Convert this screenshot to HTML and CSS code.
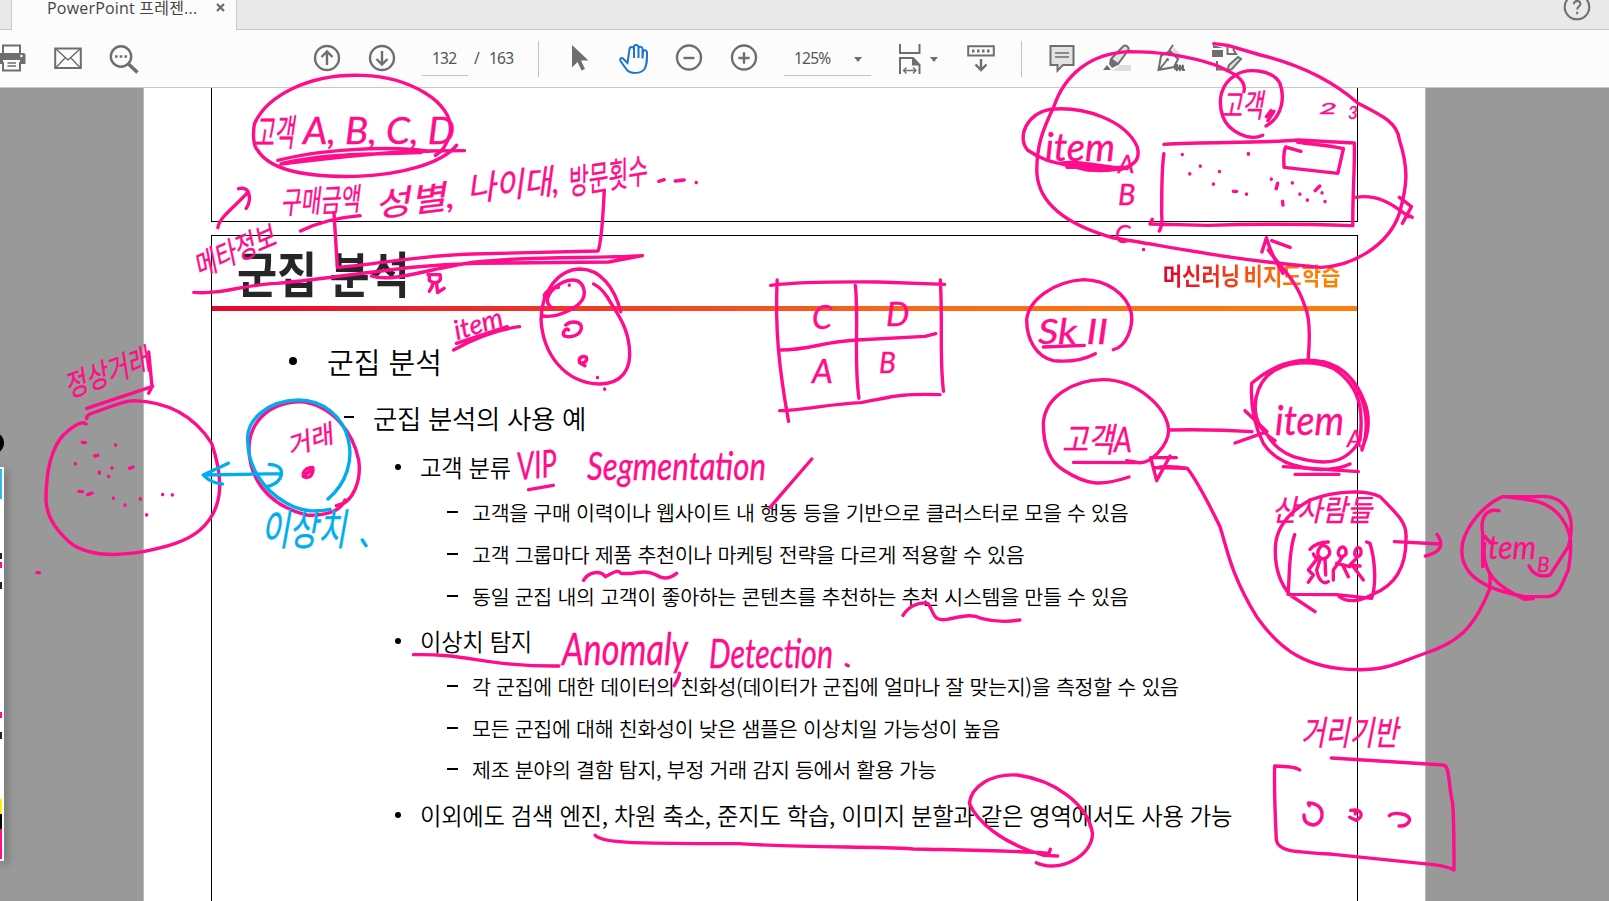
FILE: index.html
```html
<!DOCTYPE html>
<html lang="ko">
<head>
<meta charset="utf-8">
<title>PowerPoint 프레젠테이션</title>
<link rel="stylesheet" href="styles.css">
</head>
<body>
<div class="app">
  <header class="tabbar">
    <div class="tab"><span class="tab-title">PowerPoint 프레젠...</span><svg class="tab-close" viewBox="0 0 9 9"><path d="M1 1l7 7M8 1l-7 7"/></svg></div>
    <svg class="help" viewBox="0 0 28 28"><circle cx="14" cy="14" r="12.3"/><path d="M10.800 11.200c0-4.400 6.800-4.200 6.600-.2-.2 2.600-3.200 2.600-3.200 5.500M14.200 18.800v2.400"/></svg>
  </header>
  <nav class="toolbar">
    <svg class="ic print" viewBox="0 0 26 28"><path class="s" d="M3 10V1.500h17V10M3 18v8.500h17V18"/><path class="f" d="M0 9h23.500q2 0 2 2v9H20v-4H3v4H0z"/><path class="t" d="M7.500 19h8.500M7.500 22h8.500"/><circle cx="21.500" cy="12" r="1.200" fill="#fff"/></svg>
    <svg class="ic mail" viewBox="0 0 28 28"><path class="s" d="M1.200 4.500h25.600v19.500H1.200z"/><path class="t" d="M2 5l12 11L26 5M2 23.500l9-9.500M26 23.500l-9-9.500"/></svg>
    <svg class="ic find" viewBox="0 0 30 30"><circle class="s b" cx="12" cy="12.500" r="10.200"/><path class="s thick" d="M19.500 20l9 8.500"/><path class="f" d="M6 11.300h2.600v2.400H6zM10.700 11.300h2.600v2.400h-2.600zM15.400 11.300H18v2.400h-2.600z"/></svg>
    <svg class="ic up" viewBox="0 0 28 28"><circle class="s b" cx="14" cy="14" r="12"/><path class="s b" d="M14 21V8M8.500 13L14 7.500l5.500 5.500"/></svg>
    <svg class="ic down" viewBox="0 0 28 28"><circle class="s b" cx="14" cy="14" r="12"/><path class="s b" d="M14 7v13M8.500 15l5.500 5.500 5.500-5.500"/></svg>
    <div class="field page-no">132</div><span class="slash">/</span><span class="total">163</span>
    <i class="sep s1"></i>
    <svg class="ic cursor" viewBox="0 0 18 28"><path class="f" d="M1 1v22.500l5.500-5.500 4 8.500 3.500-1.500-4-8.500h7.500z"/></svg>
    <svg class="ic hand" viewBox="0 0 30 30"><path class="s blue" d="M8.500 19L4 14.500c-2-1.500-3.500.5-2.500 2.500l6.500 9c4 4 14 4 17.500-1 2.500-4 2.500-8 2.500-16.500-.5-3-4-3-4 0l-.5 6V4.500c-.5-2.500-4-2.500-4 0V14 3c-.5-2.600-4.500-2.600-4.500 0v11V5c-.5-3-4.500-2.500-4.500.5z"/></svg>
    <svg class="ic minus" viewBox="0 0 28 28"><circle class="s b" cx="14" cy="13.500" r="12"/><path class="s b" d="M8.500 14h11"/></svg>
    <svg class="ic plus" viewBox="0 0 28 28"><circle class="s b" cx="14" cy="13.500" r="12"/><path class="s b" d="M8.300 14h11.400M14 8.300v11.400"/></svg>
    <div class="field zoom">125%<b class="caret"></b></div>
    <svg class="ic fit" viewBox="0 0 24 30"><path class="s" d="M2 0v9h19.500V0M2 30V14h13l6.500 7v9"/><path class="f" d="M14 13l8 8.500h-8z"/><path class="t" d="M5.500 26.500h12.500M8.500 23.500l-3 3 3 3M15 23.500l3 3-3 3"/></svg><b class="caret c2"></b>
    <svg class="ic keys" viewBox="0 0 28 28"><path class="s" d="M1.200 2.200h25.600v9.300H1.200z"/><path class="f" d="M5 5.500h2.500v3H5zM10 5.500h2.500v3H10zM15 5.500h2.500v3H15zM20 5.500h2.500v3H20z"/><path class="s b" d="M14 15v11M8.500 20.500L14 26l5.500-5.500"/></svg>
    <i class="sep s2"></i>
    <svg class="ic note" viewBox="0 0 26 28"><path class="s g" d="M1.500 2h23v19H14l-5.500 5.500V21h-7z"/><path class="t" d="M6 9h14M6 13h14"/></svg>
    <svg class="ic mark" viewBox="0 0 28 28"><path class="pale" d="M9 27l8-6h11v6z"/><path class="s g" d="M8 15L20 2.500c3-2.500 7 1 5 4L15 20z"/><path class="f" d="M7 15l8 6-6 3-3-4zM4 21l4 5H0z"/></svg>
    <svg class="ic sign" viewBox="0 0 30 28"><path class="pale" d="M17 3l9 10-4 3-8-8z"/><path class="s" d="M1.500 26L4 12l9-5 8 8-4 8zM2 26l8-10M12 7l4-6M18 26c1-3 2-4 2-6v6c2-1 2-3 3-5v5c2-1 2-3 3-5v5h2"/><circle class="f" cx="10.500" cy="15.500" r="1.600"/></svg>
    <svg class="ic shapes" viewBox="0 0 30 28"><path class="f" d="M0 6h11v7H0zM1 1l10 3H1z"/><path class="s" d="M15.500 2v8h8.500l-3-5M5 17v8.500h7"/><path class="s g" d="M15 27l2-6 9-8 3 2-9 10z"/></svg>
  </nav>
  <main class="viewer">
    <div class="sheet">
      <section class="slide prev"></section>
      <section class="slide current">
        <div class="slide-head"><h1>군집 분석</h1><p class="chapter">머신러닝 비지도학습</p></div>
        <div class="rule"></div>
        <ul class="outline">
          <li class="l1">군집 분석</li>
          <li class="l2">군집 분석의 사용 예</li>
          <li class="l3">고객 분류</li>
          <li class="l4">고객을 구매 이력이나 웹사이트 내 행동 등을 기반으로 클러스터로 모을 수 있음</li>
          <li class="l4">고객 그룹마다 제품 추천이나 마케팅 전략을 다르게 적용할 수 있음</li>
          <li class="l4">동일 군집 내의 고객이 좋아하는 콘텐츠를 추천하는 추천 시스템을 만들 수 있음</li>
          <li class="l3">이상치 탐지</li>
          <li class="l4">각 군집에 대한 데이터의 친화성(데이터가 군집에 얼마나 잘 맞는지)을 측정할 수 있음</li>
          <li class="l4">모든 군집에 대해 친화성이 낮은 샘플은 이상치일 가능성이 높음</li>
          <li class="l4">제조 분야의 결함 탐지, 부정 거래 감지 등에서 활용 가능</li>
          <li class="l3 last">이외에도 검색 엔진, 차원 축소, 준지도 학습, 이미지 분할과 같은 영역에서도 사용 가능</li>
        </ul>
      </section>
    </div>
  </main>
</div>

<div class="knob"></div>
<aside class="palette"><i class="p-blue"></i><i class="p-white"></i><i class="p-yellow"></i><i class="p-black"></i><i class="p-pink"></i></aside>

<svg class="ink" viewBox="0 0 1609 901">
  <!-- customer list, upper left -->
  <g transform="translate(180 70) scale(.34439 .33333)">
    <path d="M216 162C250 80 370 10 530 16C660 20 800 95 784 190Q772 238 742 256M216 162C210 200 215 230 225 240C260 300 370 322 510 319C640 316 760 280 803 226"/>
    <path d="M284 271C400 240 600 225 724 244M293 282C450 262 600 244 722 243L826 242M296 280C420 250 560 252 700 248M340 272C460 258 560 252 660 246"/>
    <path d="M110 473C115 440 160 410 196 368M170 356C190 352 200 358 202 385Q200 405 192 415"/>
    <path d="M350 483C400 458 460 442 523 437M447 427L457 592C560 585 700 555 850 552L1214 543C1226 510 1228 430 1232 362"/>
    <path d="M40 667C120 674 180 645 280 640C500 620 640 585 860 580L1245 576L1343 557C1200 567 1050 556 860 576C740 590 620 640 556 618"/>
    <path d="M720 614H755C762 640 740 642 724 632V614M735 640Q730 655 724 664M745 640L748 668L767 655"/>
    <path d="M1390 334l16-5M1438 333l26-3M1499 337v1"/>
  </g>
  <!-- item matrix, upper right -->
  <g transform="translate(1020 0) scale(.37564 .33333)">
    <path d="M596 275C605 235 560 215 520 195C440 165 370 155 290 155C190 160 120 220 90 320C60 390 43 440 45 520C50 600 110 670 250 714C400 740 560 780 800 802C880 800 980 740 1010 640C1030 560 1036 510 1010 420C1005 370 970 350 900 310C820 230 730 190 640 165L553 136L516 131"/>
    <path d="M80 328C20 340-10 410 20 450C70 490 100 487 180 510C250 515 330 510 312 440C280 360 170 318 80 328M105 490C150 480 210 500 285 506M125 502H288M120 494L270 508"/>
    <path d="M655 378C700 350 705 290 692 250C670 205 600 205 575 225C535 250 525 300 540 350C555 395 610 425 646 406"/>
    <path d="M383 433C500 425 640 430 740 420L890 429C892 500 885 580 886 677C700 670 600 672 500 676L346 672L352 658M383 461C376 520 378 580 377 640Q380 675 371 693"/>
    <path d="M748 454L707 441C700 460 702 480 703 502L846 520L861 446C820 435 780 434 738 426"/>
    <path d="M432 463v1M480 498v1M452 521v1M531 514v1M515 552v1M608 460v3M568 574h9M603 582v1M669 537v1M725 548v1M686 550l-4 16M699 604l1 11M745 582v1M765 600v1M786 572l12-14M804 578v1M812 604v1M329 748v1"/>
    <path d="M894 592C950 582 990 610 1034 650M1010 592L1042 620L1018 670M1028 642L1044 652M656 350l12-18M660 362l16-28"/>
    <path d="M644 756L656 713C670 770 690 800 700 820M670 722L719 742"/>
  </g>
  <!-- outlier sketch, left -->
  <g transform="translate(0 340) scale(.33333)">
    <path d="M258 252Q245 236 190 285C145 335 138 420 138 480C140 540 180 580 210 608C270 655 370 645 430 635C500 620 560 605 600 570C680 500 665 400 635 310C590 240 520 185 400 182C370 182 320 205 270 222Q258 228 260 236"/>
    <path d="M260 205L458 139M446 36L456 140L446 160"/>
    <path d="M247 307l9 1M347 314v2M284 348l9-2M226 370v2M298 396v4M336 384v1M326 409v1M389 385l10-4M237 454l10 1M263 464l13-5M340 474v1M375 495v1M421 476v2M488 463v1M517 464v1M440 524v1M111 698h7"/>
    <path d="M1009 497C1060 490 1085 420 1076 360C1060 280 1000 195 900 185C800 190 750 250 747 320C745 410 800 495 920 525C960 528 1020 520 1035 480"/>
    <path d="M910 400C915 385 930 382 938 382Q942 395 932 408Q920 416 910 410ZM916 404L932 392"/>
    <g class="cyan"><path d="M984 477C1040 430 1060 360 1045 300C1030 230 970 180 895 180C800 182 745 240 743 290C740 380 790 450 860 490C910 518 950 515 990 508"/>
    <path d="M840 401L610 405L685 370M610 405Q630 428 667 432M808 373C845 375 850 395 840 415Q828 435 798 440M1087 600l11 17"/></g>
  </g>
  <!-- cluster loop and quadrant grid -->
  <g transform="translate(400 260) scale(.35714 .33333)">
    <path d="M618 155C600 80 560 28 505 27C440 28 395 100 395 180C400 280 460 370 560 372C620 370 650 330 642 260C635 190 600 150 580 110Q560 80 542 72"/>
    <path d="M428 146C405 130 410 110 430 85C470 50 510 50 516 95C520 140 440 175 400 168M404 105C415 85 430 82 444 82M404 112L430 88M474 75v1"/>
    <path d="M464 195C480 180 510 185 508 205C505 225 480 235 460 228C452 220 465 200 472 210M503 308C498 292 512 286 522 292C526 304 514 312 503 308L518 317M553 352v1M573 387v1"/>
    <path d="M150 270C200 240 260 210 335 200M158 250L300 200"/>
    <path d="M1038 76C1120 65 1220 65 1340 66L1525 73M1056 60C1050 200 1060 320 1088 484M1063 452C1140 450 1200 432 1290 428C1380 410 1400 400 1512 404M1513 60C1520 200 1510 300 1522 394M1275 76C1285 180 1270 300 1285 415M1065 270C1150 270 1180 245 1280 240L1470 229L1500 221"/>
    <path d="M360 689L429 676M1036 742L1153 597"/>
  </g>
  <!-- customer to item relations -->
  <g transform="translate(960 250) scale(.33333)">
    <path d="M460 299C500 290 520 230 514 190C500 130 440 90 370 89C280 95 205 150 200 210C200 270 230 320 280 332C330 337 370 330 406 311M250 291L373 286"/>
    <path d="M507 681C420 710 380 705 310 660C260 630 250 570 250 520C255 440 340 390 430 389C530 390 620 470 626 540C625 590 570 640 538 638L340 637M500 632L538 638"/>
    <path d="M629 540C720 538 800 540 876 545M855 482L921 545L825 579M572 623H649M572 623L590 692L630 618M584 653L680 655"/>
    <path d="M1045 325C1050 260 1050 200 1035 170C1010 90 960 50 925 0"/>
    <path d="M1206 600C1240 500 1200 390 1130 350C1060 315 960 325 875 400C870 480 890 540 910 580C960 660 1100 675 1170 642M945 572C860 520 880 420 920 380C970 330 1060 330 1120 355C1220 420 1205 520 1200 570C1160 640 1100 650 1000 620Q950 600 925 560M1206 595C1228 550 1230 500 1215 460C1190 390 1150 350 1090 335"/>
    <path d="M970 650L1195 665M1005 673H1137"/>
  </g>
  <g transform="translate(1120 460) scale(.33333)">
    <path d="M120 21Q165 18 202 25C240 75 280 160 300 200C320 260 330 340 410 470C480 570 560 628 712 629C800 630 830 610 910 582C1010 550 1060 510 1110 385V345"/>
    <path d="M655 407C680 430 720 425 760 402C840 370 860 300 858 230C860 190 840 170 780 110C740 90 650 90 570 120C500 160 465 210 466 270C465 330 480 370 510 405L585 455M524 224C505 280 510 340 504 403L650 404L755 415C770 370 765 300 750 250L740 246"/>
    <path d="M823 245L962 252M951 223C970 250 970 275 916 288"/>
    <path d="M1137 152C1100 145 1080 170 1088 220V320M1148 110C1080 140 1020 220 1026 280C1030 350 1100 390 1215 410H1280C1320 410 1325 370 1345 330C1360 240 1350 210 1325 175C1280 110 1200 118 1148 110H1250C1340 100 1370 170 1345 260L1290 345C1260 353 1240 345 1227 318M1092 270C1090 340 1130 380 1215 418L1240 416M1090 228L1110 245"/>
    <path d="M570 268Q590 246 625 246M600 262c-20 25 10 50 28 22c6-22-20-35-28-22M580 282L590 298L565 330L580 345L565 367M600 300L590 330C595 360 610 375 625 365M615 295L617 345M660 265c-15 20 5 35 18 17c2-20-10-25-18-17M668 290L640 330V360M668 315L685 350M650 310L690 320M708 268c-10 18 5 32 15 13c2-20-10-22-15-13M712 292L690 315L720 318M700 320L730 360"/>
  </g>
  <!-- underlines in the body text -->
  <g transform="translate(380 500) scale(.4847 .33333)">
    <path d="M420 241C430 215 455 210 465 230C480 220 490 205 497 220C530 225 540 205 570 225Q590 245 612 220M1079 346C1090 320 1110 305 1130 310C1145 340 1140 365 1170 358C1200 350 1220 340 1240 355Q1280 370 1320 360M69 464C180 460 220 500 369 498M618 520Q616 535 607 557M962 494l4 3"/>
  </g>
  <g transform="translate(380 660) scale(.4847 .33333)">
    <path d="M444 526C460 550 520 550 740 551C900 565 1000 558 1100 567C1200 570 1280 570 1380 580L1383 568M1398 588L1370 586C1280 550 1230 480 1216 430C1220 380 1260 340 1315 345C1390 360 1460 430 1470 520C1470 590 1400 640 1354 608"/>
  </g>
  <g transform="translate(1100 640) scale(.33333)">
    <path d="M599 390Q585 379 524 378C522 450 526 540 529 600C535 635 580 635 700 643L1000 674Q1045 680 1062 690C1062 620 1062 540 1058 490C1045 440 1050 375 1030 375L694 354"/>
    <path d="M628 497L625 489C680 490 675 550 640 555Q610 552 612 525M752 511C785 505 795 530 768 541L749 532M766 515V522M868 527C880 515 935 520 928 543Q920 560 897 558"/>
  </g>

  <g class="hand-text">
    <text x="254" y="146" font-size="37" textLength="40" lengthAdjust="spacingAndGlyphs">고객</text>
    <text x="303" y="144" font-size="37" textLength="152" lengthAdjust="spacingAndGlyphs">A, B, C, D</text>
    <text x="281" y="214" font-size="31" textLength="79" lengthAdjust="spacingAndGlyphs" transform="rotate(-3 281 214)">구매금액</text>
    <text x="376" y="217" font-size="33" textLength="80" lengthAdjust="spacingAndGlyphs" transform="rotate(-7 376 217)">성별,</text>
    <text x="468" y="201" font-size="34" textLength="92" lengthAdjust="spacingAndGlyphs" transform="rotate(-5 468 201)">나이대,</text>
    <text x="569" y="195" font-size="34" textLength="80" lengthAdjust="spacingAndGlyphs" transform="rotate(-9 569 195)">방문횟수</text>
    <text x="199" y="278" font-size="30" textLength="86" lengthAdjust="spacingAndGlyphs" transform="rotate(-23 199 278)">메타정보</text>
    <text x="457" y="340" font-size="27" textLength="50" lengthAdjust="spacingAndGlyphs" transform="rotate(-17 457 340)">item</text>
    <text x="812" y="329" font-size="32">C</text><text x="886" y="326" font-size="33">D</text>
    <text x="812" y="383" font-size="33">A</text><text x="879" y="373" font-size="28">B</text>
    <text x="1038" y="344" font-size="34" textLength="70" lengthAdjust="spacingAndGlyphs">Sk II</text>
    <text x="1062" y="452" font-size="34" textLength="70" lengthAdjust="spacingAndGlyphs">고객A</text>
    <text x="1275" y="435" font-size="41" textLength="69" lengthAdjust="spacingAndGlyphs">item</text><text x="1347" y="447" font-size="24">A</text>
    <text x="1272" y="521" font-size="30" textLength="100" lengthAdjust="spacingAndGlyphs">산사람들</text>
    <text x="1481" y="559" font-size="33" textLength="55" lengthAdjust="spacingAndGlyphs">item</text><text x="1537" y="572" font-size="21">B</text>
    <text x="1301" y="745" font-size="34" textLength="97" lengthAdjust="spacingAndGlyphs">거리기반</text>
    <text x="518" y="480" font-size="38" textLength="40" lengthAdjust="spacingAndGlyphs" transform="rotate(-5 518 480)">VIP</text>
    <text x="587" y="480" font-size="39" textLength="179" lengthAdjust="spacingAndGlyphs">Segmentation</text>
    <text x="562" y="665" font-size="44" textLength="126" lengthAdjust="spacingAndGlyphs">Anomaly</text>
    <text x="709" y="668" font-size="40" textLength="124" lengthAdjust="spacingAndGlyphs">Detection</text>
    <text x="69" y="398" font-size="30" textLength="88" lengthAdjust="spacingAndGlyphs" transform="rotate(-20 69 398)">정상거래</text>
    <text x="290" y="456" font-size="25" textLength="47" lengthAdjust="spacingAndGlyphs" transform="rotate(-18 290 456)">거래</text>
    <text class="cy" x="261" y="545" font-size="43" textLength="85" lengthAdjust="spacingAndGlyphs">이상치</text>
    <text x="1045" y="161" font-size="38" textLength="70" lengthAdjust="spacingAndGlyphs">item</text><text x="1118" y="173" font-size="26">A</text>
    <text x="1118" y="205" font-size="29">B</text><text x="1115" y="243" font-size="25">C</text>
    <text x="1221" y="117" font-size="32" textLength="42" lengthAdjust="spacingAndGlyphs">고객</text>
    <text x="1319" y="114" font-size="15" textLength="18" lengthAdjust="spacingAndGlyphs">2</text><text x="1348" y="119" font-size="17">3</text>
  </g>
</svg>
</body>
</html>
```
FILE: styles.css
```css
* { box-sizing: border-box; }
body { margin: 0; width: 1609px; height: 901px; overflow: hidden; position: relative; background: #999; font-family: "Noto Sans", "Noto Sans CJK KR", sans-serif; }
.app { display: flex; flex-direction: column; height: 901px; }

.tabbar { height: 30px; flex: none; display: flex; justify-content: space-between; background: #e9e9e9; border-bottom: 1px solid #c8c8c8; }
.tab { width: 226px; height: 30px; margin-left: 11px; padding-left: 35px; display: flex; background: #fcfcfc; border: 1px solid #c8c8c8; border-width: 0 1px; }
.tab-title { width: 169px; font-size: 16px; line-height: 16px; color: #444; white-space: nowrap; letter-spacing: .2px; font-family: "Open Sans", "Noto Sans CJK KR", sans-serif; }
.tab-close { width: 9px; height: 9px; margin-top: 3px; fill: none; stroke: #6b6b6b; stroke-width: 2.2; }
.help { width: 28px; height: 28px; margin: -7px 18px 0 0; fill: none; stroke: #6e6e6e; stroke-width: 2; }

.toolbar { height: 58px; flex: none; display: flex; align-items: flex-start; padding-top: 14px; background: #fcfcfc; border-bottom: 1px solid #c8c8c8; font-size: 15.500px; line-height: 28px; color: #555; }
.ic { height: 28px; flex: none; overflow: visible; }
.ic .s { fill: none; stroke: #6e6e6e; stroke-width: 2; }
.ic .b { stroke-width: 2.4; }
.ic .thick { stroke-width: 3.5; }
.ic .t { fill: none; stroke: #6e6e6e; stroke-width: 1.4; }
.ic .f { fill: #6e6e6e; }
.ic .g { fill: #e3e3e3; }
.ic .pale { fill: #dedede; }
.ic .blue { stroke: #1f74cc; fill: none; }
.print { width: 26px; }
.mail { width: 28px; margin-left: 28px; }
.find { width: 30px; height: 30px; margin-left: 27px; }
.up { width: 28px; margin-left: 174px; }
.down { width: 28px; margin-left: 27px; }
.field { height: 32px; border-bottom: 1px solid #c4c4c4; letter-spacing: -.8px; }
.page-no { width: 46px; margin-left: 26px; padding-left: 10px; }
.slash { width: 8px; margin-left: 6px; }
.total { width: 26px; margin-left: 7px; letter-spacing: -.8px; }
.sep { width: 1px; height: 36px; margin-top: -3px; background: #c4c4c4; }
.s1 { margin-left: 23px; }
.cursor { width: 18px; margin-left: 32px; }
.hand { width: 30px; height: 30px; margin-left: 30px; }
.minus { width: 28px; margin-left: 26px; }
.plus { width: 28px; margin-left: 27px; }
.zoom { width: 87px; margin-left: 26px; padding: 0 9px 0 10px; display: flex; justify-content: space-between; }
.caret { width: 0; height: 0; margin-top: 13px; border: 4.500px solid transparent; border-top: 5px solid #6e6e6e; border-bottom: 0; }
.fit { width: 24px; height: 30px; margin-left: 27px; }
.c2 { margin-left: 8px; }
.keys { width: 28px; margin-left: 29px; }
.s2 { margin-left: 26px; }
.note { width: 26px; margin-left: 27px; }
.mark { width: 28px; margin-left: 28px; }
.sign { width: 30px; margin-left: 26px; }
.shapes { width: 30px; margin-left: 25px; }

.viewer { flex: 1; min-height: 0; background: #999; padding-left: 143px; overflow: hidden; }
.sheet { width: 1283px; height: 813px; padding-left: 67px; background: #fff; border-left: 1px solid #bbb; border-right: 1px solid #bbb; overflow: hidden; }
.slide { width: 1147px; border: 1px solid #000; }
.prev { height: 134px; border-top: 0; margin-bottom: 13px; }
.current { height: 700px; }
.slide-head { height: 70px; display: flex; justify-content: space-between; }
h1 { margin: 0 0 0 25px; font: 700 49px/70px "Noto Sans CJK KR", sans-serif; color: #262626; transform: scaleX(.89); transform-origin: left; padding-top: 1px; }
.chapter { margin: 4px 17px 0 0; height: 66px; font: 700 24px/70px "Noto Sans CJK KR", sans-serif; word-spacing: -3px; transform: scaleX(.878); transform-origin: right; background: linear-gradient(90deg, #e4002b, #ff7a00 75%, #ff8200); -webkit-background-clip: text; background-clip: text; color: transparent; }
.rule { height: 5px; background: linear-gradient(90deg, #e6062f, #f96a1b 62%, #ff7d0c); }
.outline { margin: 0; padding: 20px 0 0; list-style: none; font-family: "Noto Sans CJK KR", sans-serif; font-weight: 350; color: #000; }
.outline li { display: flex; align-items: center; white-space: nowrap; }
.outline li::before { content: ""; flex: none; background: #000; }
.l1 { height: 60px; font-size: 29px; padding-left: 77px; }
.l1::before { width: 8px; height: 8px; border-radius: 50%; margin-right: 30px; }
.l2 { height: 52px; font-size: 26.500px; padding-left: 132px; letter-spacing: -.4px; }
.l2::before { width: 10px; height: 2px; margin-right: 19px; }
.l3 { height: 48px; font-size: 23.300px; padding-left: 183px; letter-spacing: -.28px; }
.l3::before { width: 6px; height: 6px; border-radius: 50%; margin-right: 19px; }
.l3.last { height: 50px; }
.l4 { height: 41.900px; font-size: 20.600px; padding-left: 235px; letter-spacing: -.31px; }
.l4::before { width: 11px; height: 2px; margin-right: 14px; }

.knob { position: absolute; left: -18px; top: 432px; width: 22px; height: 22px; border-radius: 50%; background: #000; }
.palette { position: absolute; left: 0; top: 467px; width: 4px; height: 394px; padding: 2px 2px 2px 0; display: flex; flex-direction: column; background: #fff; box-shadow: 2px 3px 8px rgba(0,0,0,.45); }
.p-blue { height: 30px; background: #33b8ee; }
.p-white { height: 300px; background: linear-gradient(#fff0 54px, #222 54px 60px, #fff0 60px 63px, #ff0d8a 63px 69px, #fff0 69px 83px, #222 83px 90px, #fff0 90px 213px, #ff0d8a 213px 219px, #fff0 219px 233px, #222 233px 240px, #fff0 240px); }
.p-yellow { height: 15px; background: #ffee00; }
.p-black { height: 15px; background: #000; }
.p-pink { height: 30px; background: #ff0d8a; }

.ink { position: absolute; left: 0; top: 0; width: 1609px; height: 901px; pointer-events: none; fill: none; stroke: #ff0d8a; stroke-linecap: round; stroke-linejoin: round; }
.ink path { vector-effect: non-scaling-stroke; stroke-width: 3.400px; }
.ink .cyan { stroke: #00aeef; }
.hand-text { fill: #ff0d8a; stroke: #ff0d8a; stroke-width: .4px; font-family: "Lato", "Noto Sans CJK KR", sans-serif; font-style: italic; }
.hand-text .cy { fill: #00aeef; stroke: #00aeef; }
.hand-text text { white-space: pre; }
```
